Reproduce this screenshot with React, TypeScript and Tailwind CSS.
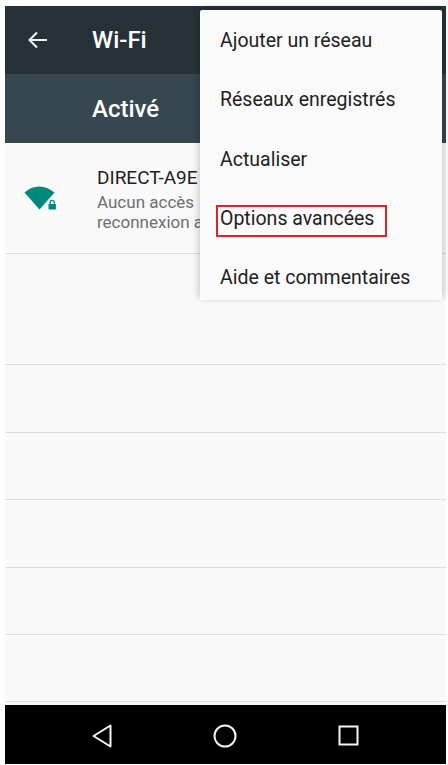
const MENU_ITEMS = [
  "Ajouter un réseau",
  "Réseaux enregistrés",
  "Actualiser",
  "Options avancées",
  "Aide et commentaires",
];

// empty network rows under the first one
const EMPTY_ROWS = ["h-[111px]", "h-[68px]", "h-[67px]", "h-[68px]", "h-[67px]", "h-[67px]"];

function WifiIcon() {
  return (
    <svg className="block" width="33" height="24" viewBox="0 0 33 24">
      <path d="M0.5 6.5 C9 -1.5 21 -1.5 30.5 6.5 L15.5 23.5 Z" fill="#00897b" />
      <rect x="24" y="14" width="8.5" height="9.5" fill="#f9f9f9" />
      <path
        d="M25.5 18 v-1.5 a2.7 2.7 0 0 1 5.4 0 v1.5 h1 v5.5 h-7.4 v-5.5 Z M26.8 18 h2.8 v-1.5 a1.4 1.4 0 0 0 -2.8 0 Z"
        fill="#00897b"
        fillRule="evenodd"
      />
    </svg>
  );
}

export default function App() {
  return (
    <div
      className="w-[448px] h-[765px] bg-white pl-[5px] pr-[2px] pt-[6px] pb-[1px] overflow-hidden"
      style={{ fontFamily: "Roboto, sans-serif" }}
    >
      <div className="relative h-full flex flex-col bg-[#f9f9f9]">
        {/* App bar */}
        <div className="h-[68px] shrink-0 bg-[#263238] flex items-center text-white">
          <svg className="ml-[22px]" width="22" height="22" viewBox="0 0 22 22" fill="none" stroke="#f5f5f5" strokeWidth="2">
            <path d="M20 11 H3 M10 3.5 L2.5 11 L10 18.5" />
          </svg>
          <span className="ml-[43px] text-[24px] font-medium">Wi-Fi</span>
        </div>
        <div className="h-[69px] shrink-0 bg-[#37474f] flex items-center pl-[87px] text-white text-[24px] font-medium">
          Activé
        </div>

        {/* Network list */}
        <div className="h-[111px] shrink-0 flex items-start border-b border-[#dcdcdc]">
          <div className="w-[92px] pl-[19px] pt-[43px] shrink-0">
            <WifiIcon />
          </div>
          <div className="whitespace-nowrap pt-[23px]">
            <div className="text-[19px] leading-[24px] mb-[2px] text-[#212121]">DIRECT-A9E</div>
            <div className="text-[17px] leading-[20px] text-[#6f6f6f]">Aucun accès</div>
            <div className="text-[17px] leading-[20px] text-[#6f6f6f]">reconnexion a</div>
          </div>
        </div>
        {EMPTY_ROWS.map((h, i) => (
          <div key={i} className={`${h} shrink-0 border-b border-[#dcdcdc]`} />
        ))}
        <div className="h-[3px] shrink-0" />

        {/* Navigation bar */}
        <div className="flex-1 bg-black flex items-center justify-center gap-[101px] pt-[2px]">
          <svg width="20" height="24" viewBox="0 0 20 24" fill="none" stroke="#f5f5f5" strokeWidth="2" strokeLinejoin="round">
            <path d="M18.5 1.5 V22.5 L1.5 12 Z" />
          </svg>
          <svg width="24" height="24" viewBox="0 0 24 24" fill="none" stroke="#f5f5f5" strokeWidth="2">
            <circle cx="12" cy="12" r="10.5" />
          </svg>
          <svg width="21" height="21" viewBox="0 0 21 21" fill="none" stroke="#f5f5f5" strokeWidth="2">
            <rect x="1.5" y="1.5" width="18" height="18" />
          </svg>
        </div>

        {/* Overflow menu */}
        <div className="absolute left-[195px] top-[4px] w-[242px] h-[290px] bg-[#fafafa] rounded-t-[2px] shadow-[-3px_-2px_6px_rgba(0,0,0,0.14),3px_-2px_6px_rgba(0,0,0,0.14)] pl-[20px] pt-[1px] overflow-hidden">
          {MENU_ITEMS.map((item) => (
            <div key={item} className="h-[59.25px] flex items-center text-[19.5px] text-[#212121] whitespace-nowrap">
              {item}
            </div>
          ))}
          {/* Annotation box */}
          <div className="absolute left-[16px] top-[195px] w-[171px] h-[32px] border-2 border-[#d9232e]" />
        </div>
      </div>
    </div>
  );
}
